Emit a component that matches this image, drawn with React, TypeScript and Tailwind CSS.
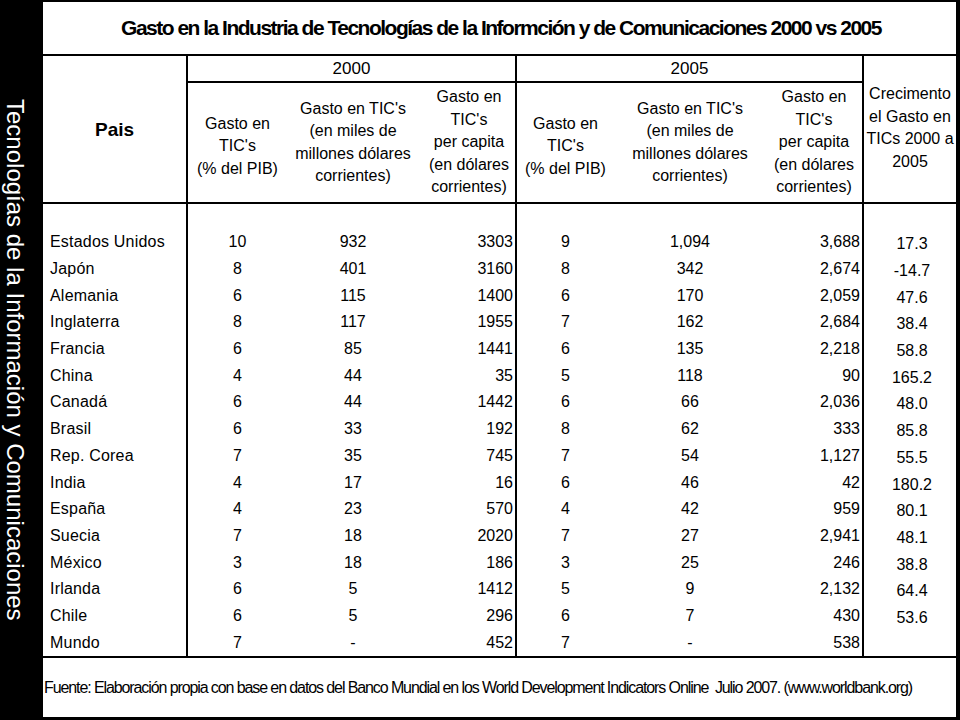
const rows: string[][] = [
  ['Estados Unidos', '10', '932', '3303', '9', '1,094', '3,688', '17.3'],
  ['Japón', '8', '401', '3160', '8', '342', '2,674', '-14.7'],
  ['Alemania', '6', '115', '1400', '6', '170', '2,059', '47.6'],
  ['Inglaterra', '8', '117', '1955', '7', '162', '2,684', '38.4'],
  ['Francia', '6', '85', '1441', '6', '135', '2,218', '58.8'],
  ['China', '4', '44', '35', '5', '118', '90', '165.2'],
  ['Canadá', '6', '44', '1442', '6', '66', '2,036', '48.0'],
  ['Brasil', '6', '33', '192', '8', '62', '333', '85.8'],
  ['Rep. Corea', '7', '35', '745', '7', '54', '1,127', '55.5'],
  ['India', '4', '17', '16', '6', '46', '42', '180.2'],
  ['España', '4', '23', '570', '4', '42', '959', '80.1'],
  ['Suecia', '7', '18', '2020', '7', '27', '2,941', '48.1'],
  ['México', '3', '18', '186', '3', '25', '246', '38.8'],
  ['Irlanda', '6', '5', '1412', '5', '9', '2,132', '64.4'],
  ['Chile', '6', '5', '296', '6', '7', '430', '53.6'],
  ['Mundo', '7', '-', '452', '7', '-', '538', ''],
];

function HeaderCell({ lines, className }: { lines: string[]; className: string }) {
  return (
    <div className={`flex flex-col items-center justify-center text-center leading-[22.5px] ${className}`}>
      {lines.map((l) => (
        <span key={l} className="whitespace-nowrap">
          {l}
        </span>
      ))}
    </div>
  );
}

export default function App() {
  return (
    <div className="flex h-[720px] w-[960px] bg-black font-['Liberation_Sans',Arial,sans-serif] text-black">
      {/* franja lateral */}
      <div className="flex w-[43px] items-center justify-center pr-[12px]">
        <span className="whitespace-nowrap text-[24px] leading-[27px] text-white [writing-mode:vertical-rl]">
          Tecnologías de la Información y Comunicaciones
        </span>
      </div>

      <div className="mt-[2px] mb-[3px] flex w-[913px] flex-col bg-white">
        <div className="flex h-[54px] items-center justify-center border-b-2 border-black pl-[3px]">
          <h1 className="whitespace-nowrap text-[21px] font-bold tracking-[-1.5px]">
            Gasto en la Industria de Tecnologías de la Informción y de Comunicaciones 2000 vs 2005
          </h1>
        </div>

        {/* encabezado */}
        <div className="flex h-[148px] border-b-2 border-black text-[16px]">
          <div className="flex w-[145px] items-center justify-center border-r-2 border-black pt-[2px] text-[19px] font-bold">
            Pais
          </div>
          <div className="flex w-[329px] flex-col border-r-2 border-black">
            <div className="flex h-[27px] items-center justify-center border-b-2 border-black text-[17px]">2000</div>
            <div className="flex flex-1">
              <HeaderCell className="w-[99px] pt-[8px]" lines={['Gasto en', "TIC's", '(% del PIB)']} />
              <HeaderCell
                className="w-[132px]"
                lines={["Gasto en TIC's", '(en miles de', 'millones dólares', 'corrientes)']}
              />
              <HeaderCell
                className="w-[96px] pl-[4px]"
                lines={['Gasto en', "TIC's", 'per capita', '(en dólares', 'corrientes)']}
              />
            </div>
          </div>
          <div className="flex w-[347px] flex-col border-r-2 border-black">
            <div className="flex h-[27px] items-center justify-center border-b-2 border-black text-[17px]">2005</div>
            <div className="flex flex-1">
              <HeaderCell className="w-[97px] pt-[8px]" lines={['Gasto en', "TIC's", '(% del PIB)']} />
              <HeaderCell
                className="w-[152px]"
                lines={["Gasto en TIC's", '(en miles de', 'millones dólares', 'corrientes)']}
              />
              <HeaderCell
                className="w-[96px]"
                lines={['Gasto en', "TIC's", 'per capita', '(en dólares', 'corrientes)']}
              />
            </div>
          </div>
          <HeaderCell
            className="w-[92px] pb-[2px]"
            lines={['Crecimento', 'el Gasto en', 'TICs 2000 a', '2005']}
          />
        </div>

        {/* datos */}
        <div className="flex h-[454px] flex-col border-b-2 border-black text-[16px]">
          <div className="flex h-[25px]">
            <div className="w-[145px] border-r-2 border-black" />
            <div className="w-[329px] border-r-2 border-black" />
            <div className="w-[347px] border-r-2 border-black" />
          </div>
          {rows.map((r) => (
            <div key={r[0]} className="flex h-[26.7px] items-center">
              <div className="flex h-full w-[145px] items-center border-r-2 border-black pl-[7px] tracking-[0.2px]">
                {r[0]}
              </div>
              <div className="w-[99px] text-center">{r[1]}</div>
              <div className="w-[132px] text-center">{r[2]}</div>
              <div className="flex h-full w-[98px] items-center justify-end border-r-2 border-black pr-[2px]">
                {r[3]}
              </div>
              <div className="w-[97px] text-center">{r[4]}</div>
              <div className="w-[152px] text-center">{r[5]}</div>
              <div className="flex h-full w-[98px] items-center justify-end border-r-2 border-black pr-[2px]">
                {r[6]}
              </div>
              <div className="w-[92px] pt-[4px] pl-[4px] text-center">{r[7]}</div>
            </div>
          ))}
        </div>

        <div className="flex flex-1 items-center pl-[1px]">
          <p className="whitespace-pre text-[16px] tracking-[-1.1px]">
            Fuente: Elaboración propia con base en datos del Banco Mundial en los World Development Indicators Online  Julio 2007. (www.worldbank.org)
          </p>
        </div>
      </div>
    </div>
  );
}
